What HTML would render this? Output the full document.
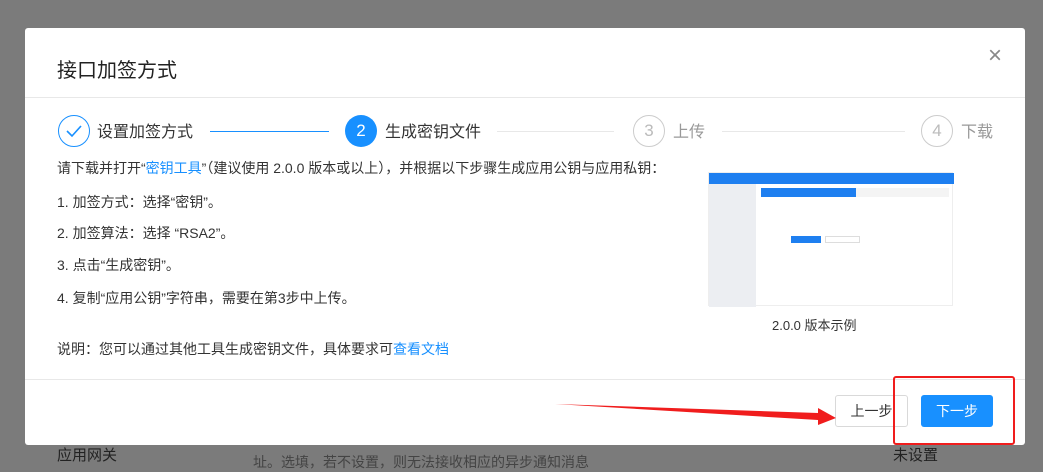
<!DOCTYPE html>
<html><head><meta charset="utf-8"><style>
*{margin:0;padding:0;box-sizing:border-box}
body{width:1043px;height:468px;overflow:hidden;background:#7b7b7b;font-family:"Liberation Sans","Noto Sans CJK SC",sans-serif;position:relative;color:#333}
.a{position:absolute;white-space:nowrap}
.modal{position:absolute;left:25px;top:28px;width:1000px;height:417px;background:#fff;border-radius:3px}
.c{position:absolute;width:32px;height:32px;border-radius:50%;text-align:center;line-height:30px;font-size:17px}
.t{font-size:14px;color:#333}
</style></head><body>
<div class="a" style="left:57px;top:444px;font-size:15px;color:#222">应用网关</div>
<div class="a" style="left:253px;top:452px;font-size:14px;color:#444">址。选填，若不设置，则无法接收相应的异步通知消息</div>
<div class="a" style="left:893px;top:444px;font-size:15px;color:#222">未设置</div>
<div class="modal">
<div class="a" style="left:32px;top:26px;font-size:20px;color:#222">接口加签方式</div>
<div class="a" style="left:963px;top:14px;font-size:24px;color:#888;font-weight:300">×</div>
<div class="a" style="left:0;top:69px;width:1000px;height:1px;background:#e8e8e8"></div>
<div class="c" style="left:33px;top:87px;border:1px solid #1890ff"><svg width="30" height="30" viewBox="0 0 30 30"><path d="M8 15 L13 20 L22 10" fill="none" stroke="#1890ff" stroke-width="1.6"/></svg></div>
<div class="a" style="left:72px;top:90px;font-size:16px;color:#333">设置加签方式</div>
<div class="a" style="left:185px;top:103px;width:119px;height:1px;background:#1890ff"></div>
<div class="c" style="left:320px;top:87px;background:#1890ff;color:#fff;line-height:32px">2</div>
<div class="a" style="left:360px;top:90px;font-size:16px;color:#333">生成密钥文件</div>
<div class="a" style="left:472px;top:103px;width:117px;height:1px;background:#e8e8e8"></div>
<div class="c" style="left:608px;top:87px;border:1px solid #ccc;color:#bbb">3</div>
<div class="a" style="left:648px;top:90px;font-size:16px;color:#999">上传</div>
<div class="a" style="left:697px;top:103px;width:183px;height:1px;background:#e8e8e8"></div>
<div class="c" style="left:896px;top:87px;border:1px solid #ccc;color:#bbb">4</div>
<div class="a" style="left:936px;top:90px;font-size:16px;color:#999">下载</div>
<div class="a t" style="left:32px;top:130px">请下载并打开“<span style="color:#1890ff">密钥工具</span>”（建议使用 2.0.0 版本或以上），并根据以下步骤生成应用公钥与应用私钥：</div>
<div class="a t" style="left:32px;top:164px">1. 加签方式：选择“密钥”。</div>
<div class="a t" style="left:32px;top:195px">2. 加签算法：选择 “RSA2”。</div>
<div class="a t" style="left:32px;top:227px">3. 点击“生成密钥”。</div>
<div class="a t" style="left:32px;top:260px">4. 复制“应用公钥”字符串，需要在第3步中上传。</div>
<div class="a t" style="left:32px;top:311px">说明：您可以通过其他工具生成密钥文件，具体要求可<span style="color:#1890ff">查看文档</span></div>
<div class="a" style="left:683px;top:144px;width:245px;height:134px;background:#fff;border:1px solid #eee">
 <div class="a" style="left:0;top:0;width:245px;height:11px;background:#1e7ff0"></div>
 <div class="a" style="left:0;top:11px;width:47px;height:123px;background:#eceef2"></div>
 <div class="a" style="left:52px;top:15px;width:95px;height:9px;background:#1e7ff0"></div>
 <div class="a" style="left:147px;top:15px;width:93px;height:9px;background:#f4f4f4"></div>
 <div class="a" style="left:82px;top:63px;width:30px;height:7px;background:#1e7ff0"></div>
 <div class="a" style="left:116px;top:63px;width:35px;height:7px;border:1px solid #ddd"></div>
</div>
<div class="a" style="left:747px;top:287px;font-size:13px;color:#333">2.0.0 版本示例</div>
<div class="a" style="left:0;top:351px;width:1000px;height:1px;background:#e8e8e8"></div>
<div class="a" style="left:810px;top:367px;width:73px;height:32px;border:1px solid #d9d9d9;border-radius:3px;font-size:14px;text-align:center;line-height:30px">上一步</div>
<div class="a" style="left:896px;top:367px;width:72px;height:32px;background:#1890ff;border-radius:3px;font-size:14px;color:#fff;text-align:center;line-height:32px">下一步</div>
</div>
<div class="a" style="left:893px;top:376px;width:122px;height:69px;border:2px solid #f01d1d;border-radius:3px"></div>
<svg class="a" style="left:0;top:0" width="1043" height="468"><polygon points="555,404 818,413 818,408 836,418 818,425 818,420" fill="#f01d1d"/></svg>
</body></html>
